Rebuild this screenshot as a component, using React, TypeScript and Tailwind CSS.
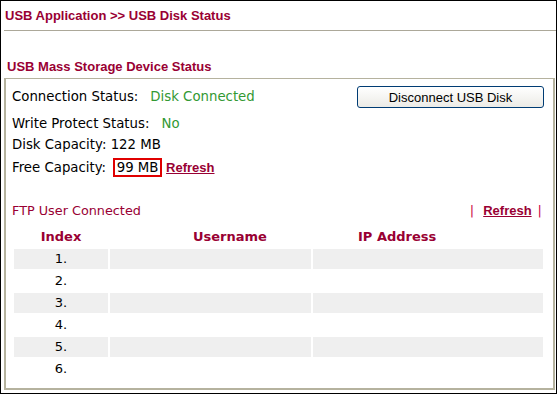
export default function App() {
  const rows = [1, 2, 3, 4, 5, 6];

  return (
    <div className="h-[394px] w-[557px] overflow-hidden border border-black bg-white font-['DejaVu_Sans',sans-serif] text-[13.3px] text-black">
      {/* page title */}
      <div className="ml-[3px] flex h-[30px] items-center border-b border-[#aca899] pl-px font-['Liberation_Sans',Arial,sans-serif] text-[13px] font-bold text-[#990033]">
        USB Application &gt;&gt; USB Disk Status
      </div>

      <div className="mt-[28px] h-[16px] pl-[6px] font-['Liberation_Sans',Arial,sans-serif] text-[13px] font-bold leading-[16px] text-[#990033]">
        USB Mass Storage Device Status
      </div>

      {/* status box */}
      <div className="ml-[3px] mt-[3px] flex h-[312px] w-[551px] flex-col border-b-2 border-l-2 border-r-2 border-t border-[#b5b29e] pl-[6px] pr-[9px]">
        <div className="mt-[6px] flex h-[24px] items-center justify-between">
          <div className="flex items-center">
            <span>Connection Status:</span>
            <span className="ml-[12px] text-[#339933]">Disk Connected</span>
          </div>
          <button className="h-[22px] w-[187px] rounded-[3px] border border-[#003c74] bg-gradient-to-b from-white to-[#ecebe6] font-['Liberation_Sans',Arial,sans-serif] text-[13px] leading-none text-black">
            Disconnect USB Disk
          </button>
        </div>

        <div className="mt-[5px] flex h-[20px] items-center">
          <span>Write Protect Status:</span>
          <span className="ml-[12px] text-[#339933]">No</span>
        </div>

        <div className="mt-px flex h-[20px] items-center">Disk Capacity: 122 MB</div>

        <div className="mt-[2px] flex h-[21px] items-center">
          <span>Free Capacity:</span>
          <span className="ml-[7px] flex h-[19px] w-[49px] items-center justify-center border-2 border-[#e00000]">
            99 MB
          </span>
          <a className="ml-[4px] font-['Liberation_Sans',Arial,sans-serif] text-[13px] font-bold text-[#990033] underline">
            Refresh
          </a>
        </div>

        {/* ftp users */}
        <div className="mt-[23px] flex h-[20px] items-center justify-between">
          <span className="text-[12.8px] text-[#990033]">FTP User Connected</span>
          <div className="mr-[2px] flex items-center text-[13px] text-[#cc0044]">
            <span>|</span>
            <a className="ml-[9px] font-['Liberation_Sans',Arial,sans-serif] font-bold text-[#990033] underline">
              Refresh
            </a>
            <span className="ml-[6px]">|</span>
          </div>
        </div>

        <div className="ml-[2px] mt-[6px] w-[529px] text-[13px]">
          <div className="grid h-[20px] grid-cols-[94px_201px_230px] items-center gap-x-[2px] font-bold text-[#990033]">
            <div className="text-center">Index</div>
            <div className="pl-[83px]">Username</div>
            <div className="pl-[45px]">IP Address</div>
          </div>
          {rows.map((n) => (
            <div
              key={n}
              className="mt-[2px] grid h-[20px] grid-cols-[94px_201px_230px] gap-x-[2px]"
            >
              <div className={`flex items-center justify-center ${n % 2 === 1 ? "bg-[#efefef]" : ""}`}>
                {n}.
              </div>
              <div className={n % 2 === 1 ? "bg-[#efefef]" : ""}></div>
              <div className={n % 2 === 1 ? "bg-[#efefef]" : ""}></div>
            </div>
          ))}
        </div>
      </div>
    </div>
  );
}
